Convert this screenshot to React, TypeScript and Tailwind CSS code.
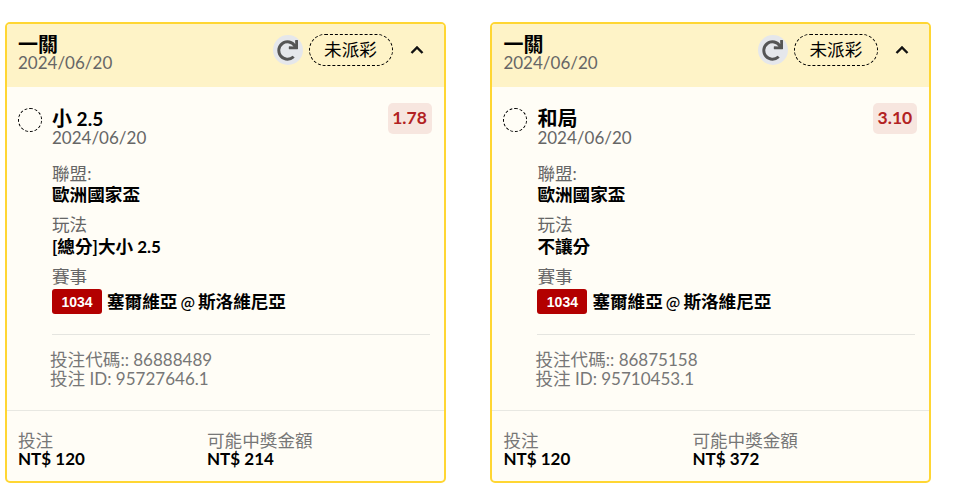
import React from "react";
import { FaRedo } from "react-icons/fa";

const font = { fontFamily: '"Lato","Noto Sans CJK TC",sans-serif' };

function T({ t, big }: { t: string; big?: boolean }) {
  const parts = t.split(/([\u4e00-\u9fff]+)/).filter(Boolean);
  return (
    <>
      {parts.map((p, i) =>
        /[\u4e00-\u9fff]/.test(p) ? (
          <span key={i} className={big ? "text-[20px]" : "text-[17.6px]"}>{p}</span>
        ) : (
          <span key={i}>{p}</span>
        )
      )}
    </>
  );
}

function Card({ pick, odds, league, market, code, id, win }: { pick: string; odds: string; league: string; market: string; code: string; id: string; win: string }) {
  return (
    <div className="w-[440.5px] h-[461px] shrink-0 border-2 border-[#ffd633] rounded-[5px] bg-[#fffdf6] flex flex-col overflow-hidden">
      <div className="h-[63px] bg-[#fef3c7] flex items-start justify-between pl-[11px] pr-[20px] pt-[10px]">
        <div className="flex flex-col">
          <div className="h-[20px] text-[18px] leading-[20px] font-bold text-black"><T t="一關" big /></div>
          <div className="text-[17px] leading-[18px] text-[#666666]">2024/06/20</div>
        </div>
        <div className="flex items-center">
          <div className="w-[30px] h-[30px] rounded-full bg-[#e5e7eb] flex items-center justify-center">
            <FaRedo size={21} color="#555555" />
          </div>
          <div className="ml-[6px] w-[84px] h-[32px] rounded-full border border-dashed border-black flex items-center justify-center text-[17.6px] text-black">未派彩</div>
          <svg className="ml-[17px]" width="14" height="10" viewBox="0 0 14 10" fill="none" stroke="#111111" strokeWidth="2.4">
            <path d="M1.5 8 7 2.5 12.5 8" />
          </svg>
        </div>
      </div>
      <div className="flex-1 flex flex-col pl-[11px] pr-[12px]">
        <div className="flex items-start justify-between pt-[16px]">
          <div className="flex items-start">
            <div className="w-[24px] h-[24px] mt-[5px] rounded-full border border-dashed border-black" />
            <div className="ml-[10px] flex flex-col pt-[4px]">
              <div className="text-[19px] h-[22px] leading-[22px] font-bold text-black"><T t={pick} big /></div>
              <div className="text-[17px] leading-[18px] text-[#666666]">2024/06/20</div>
            </div>
          </div>
          <div className="w-[44px] h-[31px] rounded-[5px] bg-[#f7e6df] text-[#b22222] text-[17.5px] font-bold flex items-center justify-center">{odds}</div>
        </div>
        <div className="ml-[34px] mt-[17px] flex flex-col text-[17px] leading-[20px]">
          <div className="text-[#666666] h-[20px]"><T t="聯盟:" /></div>
          <div className="font-bold text-black h-[20px] mt-[1px]"><T t={league} /></div>
          <div className="text-[#666666] h-[20px] mt-[10px]"><T t="玩法" /></div>
          <div className="font-bold text-black h-[20px] mt-[2px]"><T t={market} /></div>
          <div className="text-[#666666] h-[20px] mt-[10px]"><T t="賽事" /></div>
          <div className="flex items-center mt-[2px] h-[25px]">
            <span className="w-[50px] h-[25px] rounded-[3px] bg-[#b30000] text-white text-[14px] font-bold flex items-center justify-center" style={{ fontFamily: '"Liberation Sans",sans-serif' }}>1034</span>
            <span className="ml-[5px] font-bold text-black whitespace-nowrap"><T t="塞爾維亞" /><span className="mx-[3px] text-[15px] font-['Noto_Sans_CJK_TC'] font-medium">@</span><T t="斯洛維尼亞" /></span>
          </div>
          <div className="border-t border-[#e5e5e0] mt-[20px] mr-[2px]" />
          <div className="-ml-[2px] mt-[15px] leading-[19px] text-[#777777]">
            <div><T t="投注代碼:: " />{code}</div>
            <div><T t="投注 ID: " />{id}</div>
          </div>
        </div>
      </div>
      <div className="h-[71px] border-t border-[#e8e8e2] pl-[11px] pt-[20px] flex">
        <div className="w-[189px] flex flex-col">
          <div className="text-[17px] leading-[19px] text-[#777777]"><T t="投注" /></div>
          <div className="text-[17px] leading-[18px] font-bold text-black">NT$ 120</div>
        </div>
        <div className="flex flex-col">
          <div className="text-[17px] leading-[19px] text-[#777777]"><T t="可能中獎金額" /></div>
          <div className="text-[17px] leading-[18px] font-bold text-black">NT$ {win}</div>
        </div>
      </div>
    </div>
  );
}

export default function App() {
  return (
    <div className="w-[961px] h-[504px] bg-white flex items-start pt-[22px] pl-[5px] gap-[44.9px] overflow-hidden" style={font}>
      <Card pick="小 2.5" odds="1.78" league="歐洲國家盃" market="[總分]大小 2.5" code="86888489" id="95727646.1" win="214" />
      <Card pick="和局" odds="3.10" league="歐洲國家盃" market="不讓分" code="86875158" id="95710453.1" win="372" />
    </div>
  );
}
